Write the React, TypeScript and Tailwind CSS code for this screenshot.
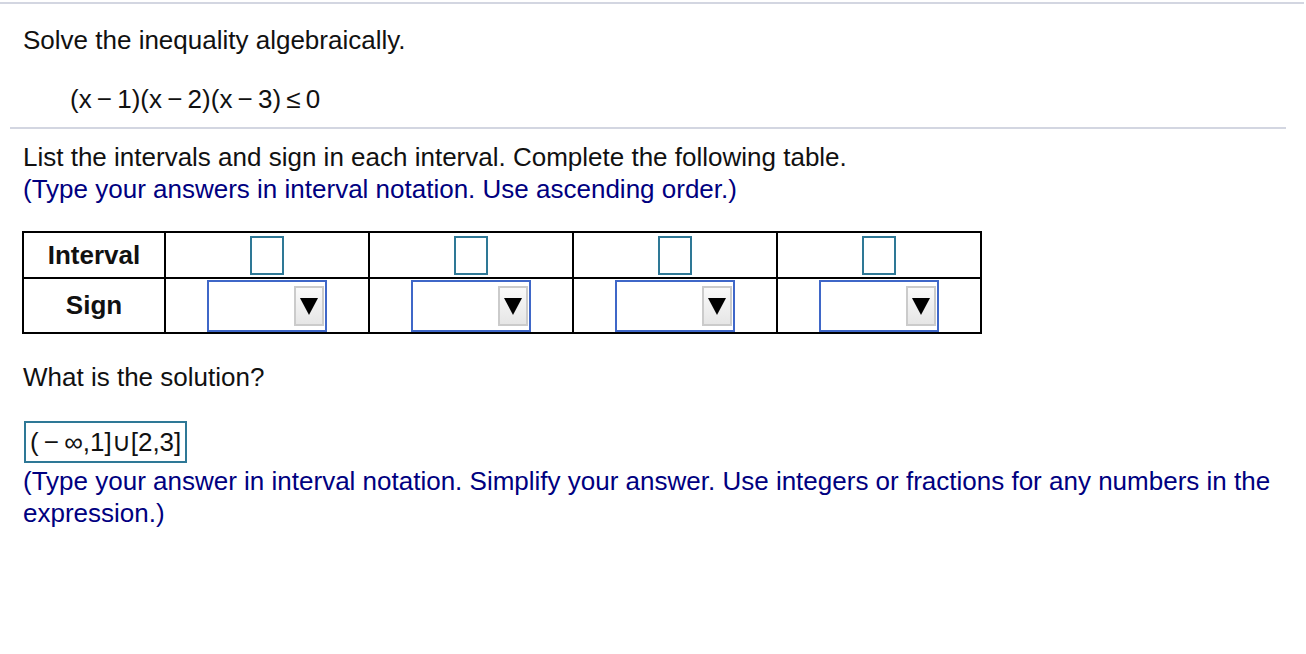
import React from "react";

function IntervalBox() {
  return <div className="mx-auto h-[39px] w-[34px] border-2 border-[#2e7896] bg-white" />;
}

function SignSelect() {
  return (
    <div className="mx-auto flex h-[52px] w-[120px] items-center justify-end border-2 border-[#3f67c8] bg-white pr-[1px]">
      <div className="flex h-[40px] w-[30px] items-center justify-center border-2 border-[#cbcbcb] bg-gradient-to-b from-[#fafafa] to-[#e6e6e6]">
        <svg width="18" height="18" viewBox="0 0 18 18">
          <polygon points="0,1 18,1 9,18" fill="#000" />
        </svg>
      </div>
    </div>
  );
}

export default function App() {
  const cols = [0, 1, 2, 3];
  return (
    <div
      className="min-h-[654px] bg-white text-[26px] text-[#111]"
      style={{ fontFamily: '"Liberation Sans", Arial, sans-serif' }}
    >
      <div className="pt-[2px]">
        <div className="h-[2px] w-[1304px] bg-[#d3d6e1]" />
      </div>

      <div className="pl-[23px] pt-[20px] leading-[32px]">Solve the inequality algebraically.</div>
      <div className="pl-[70px] pt-[27px] leading-[32px]">
        (x&thinsp;−&thinsp;1)(x&thinsp;−&thinsp;2)(x&thinsp;−&thinsp;3)&thinsp;≤&thinsp;0
      </div>

      <div className="ml-[10px] mt-[12px] h-[2px] w-[1276px] bg-[#d3d6e1]" />

      <div className="pl-[23px] pt-[12px] leading-[32px]">
        <div>List the intervals and sign in each interval. Complete the following table.</div>
        <div className="text-[#000080]">(Type your answers in interval notation. Use ascending order.)</div>
      </div>

      <div className="pl-[22px] pt-[26px]">
        <table className="border-collapse border-2 border-black">
          <tbody>
            <tr className="h-[46px]">
              <td className="w-[142px] border-2 border-black text-center font-bold">Interval</td>
              {cols.map((c) => (
                <td key={c} className="w-[204px] border-2 border-black text-center">
                  <IntervalBox />
                </td>
              ))}
            </tr>
            <tr className="h-[55px]">
              <td className="border-2 border-black text-center font-bold">Sign</td>
              {cols.map((c) => (
                <td key={c} className="border-2 border-black align-bottom">
                  <SignSelect />
                </td>
              ))}
            </tr>
          </tbody>
        </table>
      </div>

      <div className="pl-[23px] pt-[27px] leading-[32px]">What is the solution?</div>

      <div className="pl-[24px] pt-[28px]">
        <div className="inline-block border-2 border-[#2e7896] px-[4px] leading-[38px] text-[#111]">
          (&thinsp;−&thinsp;∞,1]∪[2,3]
        </div>
      </div>

      <div className="mt-[2px] w-[1290px] pl-[23px] leading-[32px] text-[#000080]">
        (Type your answer in interval notation. Simplify your answer. Use integers or fractions for any numbers in the
        expression.)
      </div>
    </div>
  );
}
